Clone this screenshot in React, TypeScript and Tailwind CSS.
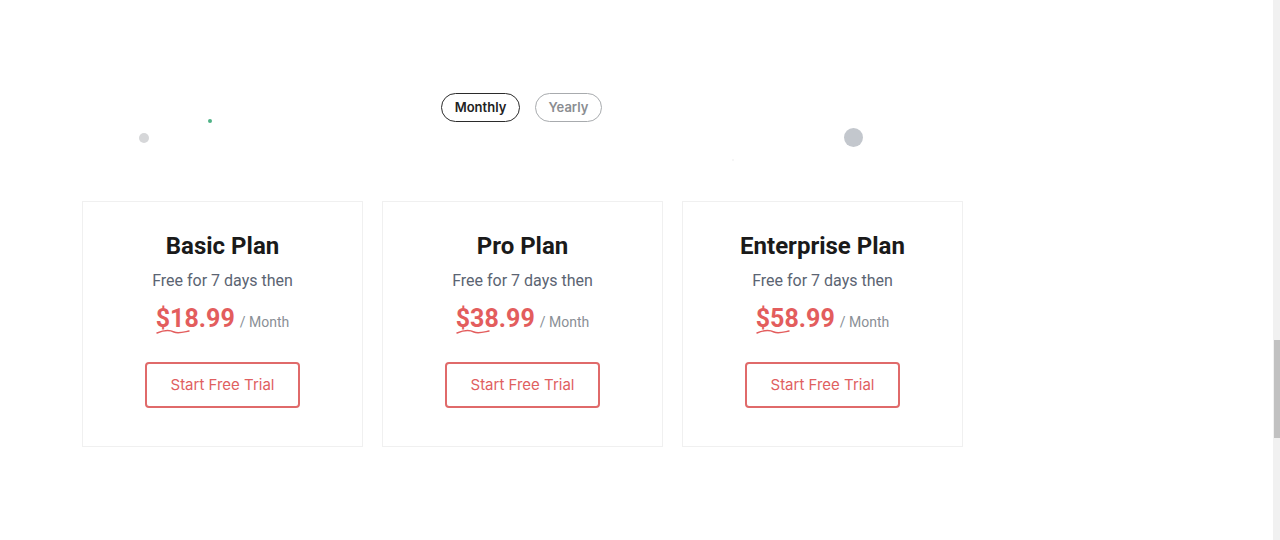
const plans = [
  { name: "Basic Plan", dollars: "18", cents: ".99" },
  { name: "Pro Plan", dollars: "38", cents: ".99" },
  { name: "Enterprise Plan", dollars: "58", cents: ".99" },
];

function Squiggle() {
  return (
    <svg
      className="absolute left-0 top-[24px]"
      width="34"
      height="8"
      viewBox="0 0 34 8"
      fill="none"
    >
      <path
        d="M1 5 C 8 2, 14 2, 18 4 C 22 6, 28 4, 33 3"
        stroke="#e35d5d"
        strokeWidth="1.4"
        strokeLinecap="round"
      />
    </svg>
  );
}

function PlanCard({ name, dollars, cents }: { name: string; dollars: string; cents: string }) {
  return (
    <div className="w-[281px] h-[246px] border border-[#f0f0f0] bg-white flex flex-col items-center pt-[29px]">
      <h3 className="text-[24px] leading-[30px] font-bold text-[#1a1a1a] font-['Roboto',sans-serif]">
        {name}
      </h3>
      <p className="mt-[9px] text-[16px] leading-[22px] text-[#5b6472] font-['Roboto',sans-serif]">
        Free for 7 days then
      </p>
      <div className="mt-[12px] flex items-baseline gap-[5px] font-['Roboto',sans-serif]">
        <span className="relative text-[25px] leading-[30px] font-bold text-[#e35d5d]">
          ${dollars}
          {cents}
          <Squiggle />
        </span>
        <span className="text-[14px] text-[#8a8f96]">/ Month</span>
      </div>
      <button className="mt-[28px] w-[155px] h-[46px] border-2 border-[#e06a6a] rounded-[4px] text-[15px] text-[#e05f5f] font-['Inter',sans-serif]">
        Start Free Trial
      </button>
    </div>
  );
}

export default function App() {
  return (
    <div className="w-[1280px] h-[540px] bg-white flex overflow-hidden">
      <main className="relative flex-1 pt-[93px] pl-[82px]">
        <span className="absolute left-[139px] top-[133px] w-[10px] h-[10px] rounded-full bg-[#d6d7d9]" />
        <span className="absolute left-[208px] top-[119px] w-[4px] h-[4px] rounded-full bg-[#4fb286]" />
        <span className="absolute left-[844px] top-[128px] w-[19px] h-[19px] rounded-full bg-[#c3c7cd]" />
        <span className="absolute left-[732px] top-[159px] w-[2px] h-[2px] rounded-full bg-[#f3f3f3]" />

        <div className="flex gap-[15px] ml-[359px] font-['Inter',sans-serif]">
          <button className="w-[79px] h-[29px] rounded-full border border-[#2b2b2b] text-[13px] font-semibold text-[#222]">
            Monthly
          </button>
          <button className="w-[67px] h-[29px] rounded-full border border-[#a8abae] text-[13px] font-semibold text-[#8a8d91]">
            Yearly
          </button>
        </div>

        <div className="mt-[79px] flex gap-[19px]">
          {plans.map((p) => (
            <PlanCard key={p.name} {...p} />
          ))}
        </div>
      </main>
      <div className="w-[7px] h-full bg-[#f1f1f1] flex flex-col">
        <div className="h-[340px]" />
        <div className="h-[98px] ml-[1px] bg-[#c1c1c1]" />
      </div>
    </div>
  );
}
